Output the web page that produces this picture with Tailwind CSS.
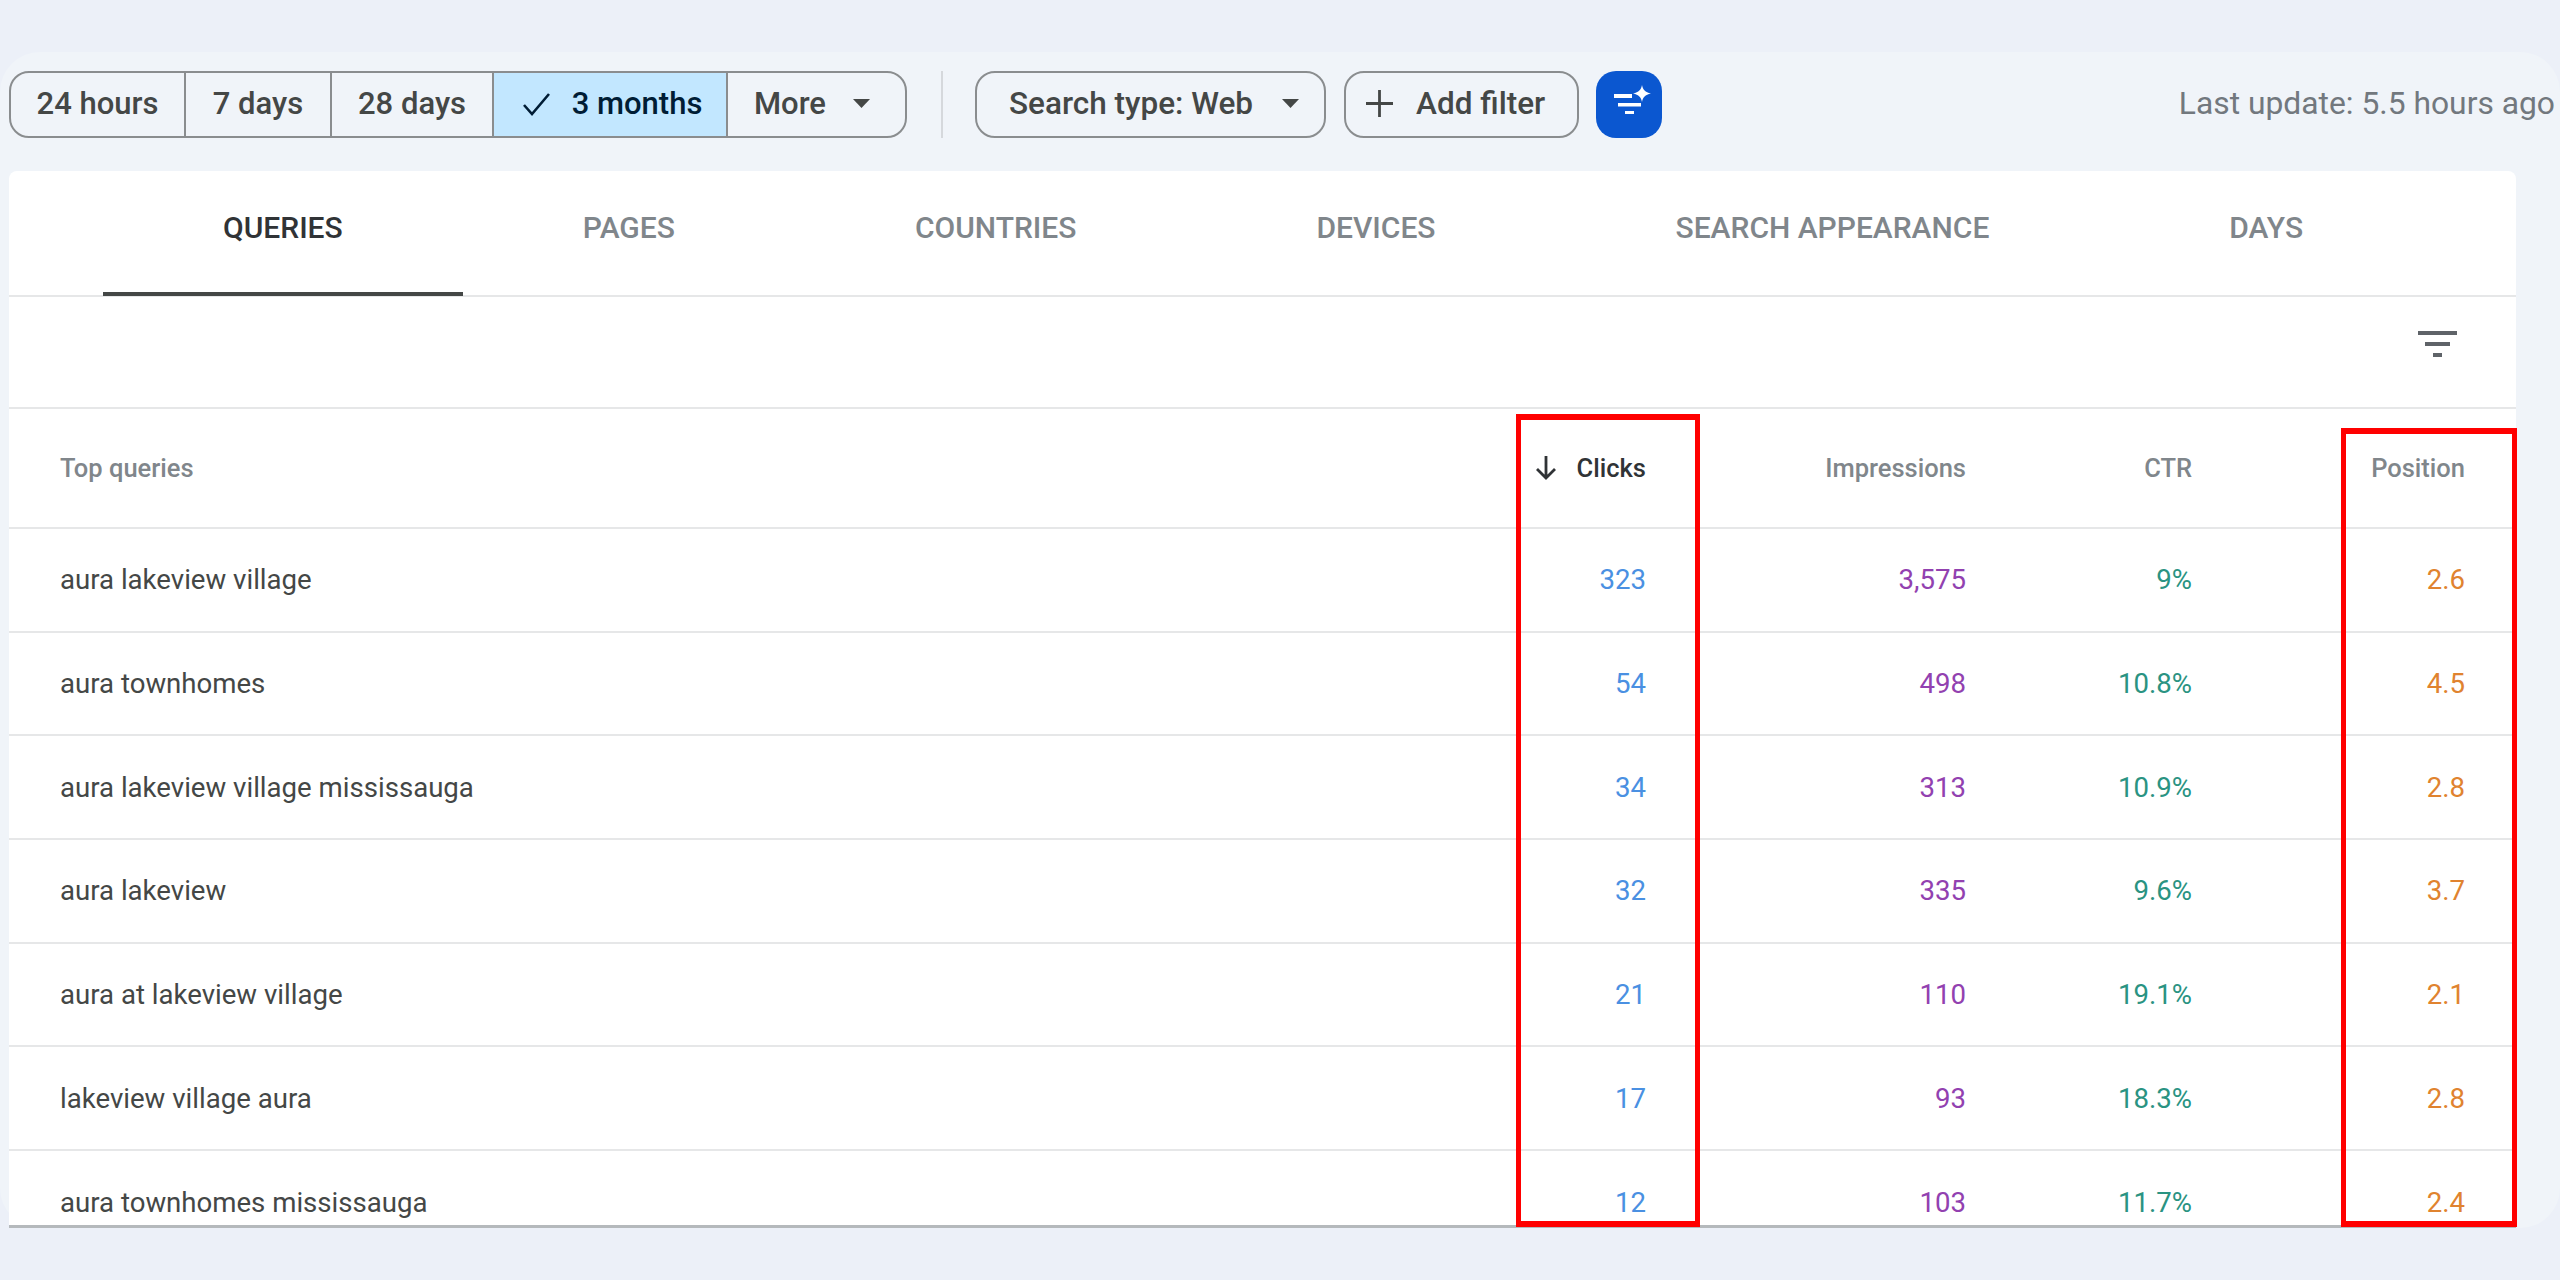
<!DOCTYPE html>
<html><head><meta charset="utf-8">
<script src="https://cdn.jsdelivr.net/npm/@tailwindcss/browser@4"></script>
</head>
<body class="m-0 overflow-hidden bg-[#ecf0f8]">
<div class="w-[2560px] h-[1280px] pt-[52px] font-['Roboto',sans-serif] text-[#444746]">
  <div class="h-[1176px] rounded-[40px] bg-[#f0f4f9] relative">
    <div class="h-[119px] pt-[19px] pl-[9px] pr-[5px] flex items-start">
      <div class="flex h-[67px] w-[898px] rounded-[20px] border-2 border-[#8a8d8f] overflow-hidden text-[31px] font-medium leading-none">
        <div class="w-[175px] pb-[2px] flex items-center justify-center border-r-2 border-[#8a8d8f]">24 hours</div>
        <div class="w-[146px] pb-[2px] flex items-center justify-center border-r-2 border-[#8a8d8f]">7 days</div>
        <div class="w-[162px] pb-[2px] flex items-center justify-center border-r-2 border-[#8a8d8f]">28 days</div>
        <div class="w-[234px] pb-[2px] pl-[4px] flex items-center justify-center gap-[20px] bg-[#c2e7ff] text-[#001d35] border-r-2 border-[#8a8d8f]">
          <svg class="w-[30px] h-[24px]" viewBox="0 0 30 24" fill="none" stroke="#001d35" stroke-width="2.6"><path d="M2 13l8 9L27 2"/></svg>
          <span>3 months</span>
        </div>
        <div class="flex-1 pb-[2px] flex items-center pl-[26px] gap-[27px]">
          <span>More</span>
          <svg class="w-[17px] h-[9px]" viewBox="0 0 17 9" fill="#444746"><path d="M0 0h17L8.5 9z"/></svg>
        </div>
      </div>
      <div class="w-[2px] h-[67px] bg-[#d5d8dc] ml-[34px] mr-[32px]"></div>
      <div class="flex items-center h-[67px] w-[351px] pb-[2px] rounded-[20px] border-2 border-[#8a8d8f] pl-[32px] gap-[29px] text-[31.500px] font-medium leading-none">
        <span>Search type: Web</span>
        <svg class="w-[17px] h-[9px]" viewBox="0 0 17 9" fill="#444746"><path d="M0 0h17L8.5 9z"/></svg>
      </div>
      <div class="flex items-center h-[67px] w-[235px] ml-[18px] pb-[2px] rounded-[20px] border-2 border-[#8a8d8f] pl-[20px] gap-[23px] text-[31.500px] font-medium leading-none">
        <svg class="w-[27px] h-[27px]" viewBox="0 0 27 27" fill="none" stroke="#444746" stroke-width="2.8"><path d="M13.500 0v27M0 13.500h27"/></svg>
        <span>Add filter</span>
      </div>
      <div class="w-[66px] h-[67px] ml-[17px] rounded-[20px] bg-[#0b57d0] flex items-center justify-center pl-[7px] pb-[10px]">
        <svg class="w-[37px] h-[29px]" viewBox="0 0 37 29" fill="#fff"><path d="M0 9h18v4H0zM4 18h23v3.500H4zM11 26h9v3H11z"/><path d="M28 0c1 5 3 7 9 8.500-6 1.500-8 3.500-9 8.500-1-5-3-7-9-8.500 6-1.500 8-3.500 9-8.500z"/></svg>
      </div>
      <div class="ml-auto h-[67px] pb-[2px] flex items-center text-[31.800px] text-[#72787e]">Last update: 5.5 hours ago</div>
    </div>

    <div class="relative ml-[9px] w-[2507px] h-[1057px] bg-white rounded-t-[8px] overflow-hidden border-b-[3px] border-[#b5b9bc]">
      <div class="h-[126px] flex pl-[94px] border-b-2 border-[#e6e7e8] text-[30px] font-medium text-[#80868b]">
        <div class="relative h-[125px] px-[120px] pt-[34px] text-[#303336]">QUERIES<div class="absolute left-0 right-0 bottom-0 h-[4px] bg-[#444746]"></div></div>
        <div class="px-[120px] pt-[34px]">PAGES</div>
        <div class="px-[120px] pt-[34px]">COUNTRIES</div>
        <div class="px-[120px] pt-[34px]">DEVICES</div>
        <div class="px-[120px] pt-[34px]">SEARCH APPEARANCE</div>
        <div class="px-[120px] pt-[34px]">DAYS</div>
      </div>
      <div class="h-[112px] border-b-2 border-[#e6e7e8] flex justify-end items-start pt-[34px] pr-[59px]">
        <svg class="w-[39px] h-[26px]" viewBox="0 0 39 26" fill="#5f6368"><path d="M0 0h39v4H0zM7 11h25v4H7zM15 22h9v4h-9z"/></svg>
      </div>
      <div class="grid grid-cols-[1fr_200px_320px_226px_273px] px-[51px] h-[120px] items-center border-b-2 border-[#e6e7e8] text-[25.500px] font-medium text-[#80868b]">
        <div>Top queries</div>
        <div class="flex items-center justify-end gap-[19px] text-[#303336]">
          <svg class="w-[24px] h-[24px]" viewBox="0 0 24 24" fill="none" stroke="#303336" stroke-width="2.8"><path d="M12 0v22M3 13l9 9 9-9"/></svg>
          <span>Clicks</span>
        </div>
        <div class="text-right">Impressions</div>
        <div class="text-right">CTR</div>
        <div class="text-right">Position</div>
      </div>
      <div class="grid grid-cols-[1fr_200px_320px_226px_273px] px-[51px] h-[103.700px] items-center border-b-2 border-[#e6e7e8] text-[27.600px]">
        <div>aura lakeview village</div><div class="text-right text-[#4a90e2]">323</div><div class="text-right text-[#9241b0]">3,575</div><div class="text-right text-[#2a9382]">9%</div><div class="text-right text-[#e0832f]">2.6</div>
      </div>
      <div class="grid grid-cols-[1fr_200px_320px_226px_273px] px-[51px] h-[103.700px] items-center border-b-2 border-[#e6e7e8] text-[27.600px]">
        <div>aura townhomes</div><div class="text-right text-[#4a90e2]">54</div><div class="text-right text-[#9241b0]">498</div><div class="text-right text-[#2a9382]">10.8%</div><div class="text-right text-[#e0832f]">4.5</div>
      </div>
      <div class="grid grid-cols-[1fr_200px_320px_226px_273px] px-[51px] h-[103.700px] items-center border-b-2 border-[#e6e7e8] text-[27.600px]">
        <div>aura lakeview village mississauga</div><div class="text-right text-[#4a90e2]">34</div><div class="text-right text-[#9241b0]">313</div><div class="text-right text-[#2a9382]">10.9%</div><div class="text-right text-[#e0832f]">2.8</div>
      </div>
      <div class="grid grid-cols-[1fr_200px_320px_226px_273px] px-[51px] h-[103.700px] items-center border-b-2 border-[#e6e7e8] text-[27.600px]">
        <div>aura lakeview</div><div class="text-right text-[#4a90e2]">32</div><div class="text-right text-[#9241b0]">335</div><div class="text-right text-[#2a9382]">9.6%</div><div class="text-right text-[#e0832f]">3.7</div>
      </div>
      <div class="grid grid-cols-[1fr_200px_320px_226px_273px] px-[51px] h-[103.700px] items-center border-b-2 border-[#e6e7e8] text-[27.600px]">
        <div>aura at lakeview village</div><div class="text-right text-[#4a90e2]">21</div><div class="text-right text-[#9241b0]">110</div><div class="text-right text-[#2a9382]">19.1%</div><div class="text-right text-[#e0832f]">2.1</div>
      </div>
      <div class="grid grid-cols-[1fr_200px_320px_226px_273px] px-[51px] h-[103.700px] items-center border-b-2 border-[#e6e7e8] text-[27.600px]">
        <div>lakeview village aura</div><div class="text-right text-[#4a90e2]">17</div><div class="text-right text-[#9241b0]">93</div><div class="text-right text-[#2a9382]">18.3%</div><div class="text-right text-[#e0832f]">2.8</div>
      </div>
      <div class="grid grid-cols-[1fr_200px_320px_226px_273px] px-[51px] h-[103.700px] items-center text-[27.600px]">
        <div>aura townhomes mississauga</div><div class="text-right text-[#4a90e2]">12</div><div class="text-right text-[#9241b0]">103</div><div class="text-right text-[#2a9382]">11.7%</div><div class="text-right text-[#e0832f]">2.4</div>
      </div>
    </div>
    <div class="absolute left-[1516px] top-[362px] w-[184px] h-[813px] border-[5px] border-t-[6px] border-b-[6px] border-[#ff0000]"></div>
    <div class="absolute left-[2341px] top-[376px] w-[176px] h-[799px] border-[5px] border-t-[6px] border-b-[6px] border-[#ff0000]"></div>
  </div>
</div>
</body></html>
